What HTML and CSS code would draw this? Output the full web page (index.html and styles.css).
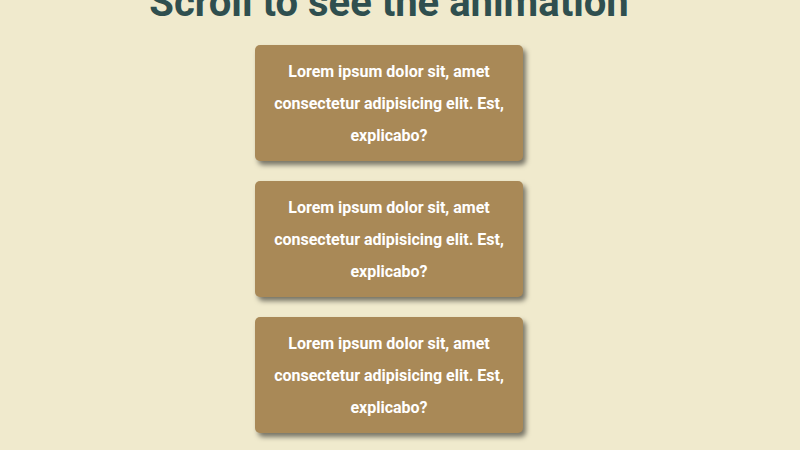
FILE: index.html
```html
<!DOCTYPE html>
<html>
<head>
<meta charset="utf-8">
<link rel="stylesheet" href="styles.css">
</head>
<body>
<h1 class="title">Scroll to see the animation</h1>
<div class="box">Lorem ipsum dolor sit, amet consectetur adipisicing elit. Est, explicabo?</div>
<div class="box">Lorem ipsum dolor sit, amet consectetur adipisicing elit. Est, explicabo?</div>
<div class="box">Lorem ipsum dolor sit, amet consectetur adipisicing elit. Est, explicabo?</div>
</body>
</html>
```
FILE: styles.css
```css
html, body {
  margin: 0;
  padding: 0;
}
body {
  background: #f0eacd;
  font-family: Roboto, "Liberation Sans", sans-serif;
  display: flex;
  flex-direction: column;
  align-items: center;
  overflow: hidden;
  height: 450px;
  padding-right: 22px;
}
.title {
  margin: -21px 0 18px 0;
  font-size: 40px;
  line-height: 48px;
  font-weight: 700;
  color: #2f4f4f;
  flex-shrink: 0;
}
.box {
  flex-shrink: 0;
  box-sizing: border-box;
  width: 268px;
  padding: 11px 10px 9px;
  margin-bottom: 20px;
  background: #a98957;
  color: #fff;
  font-size: 16px;
  font-weight: 700;
  line-height: 32px;
  text-align: center;
  border-radius: 5px;
  box-shadow: 3px 4px 5px rgba(0, 0, 0, 0.5);
}
```
